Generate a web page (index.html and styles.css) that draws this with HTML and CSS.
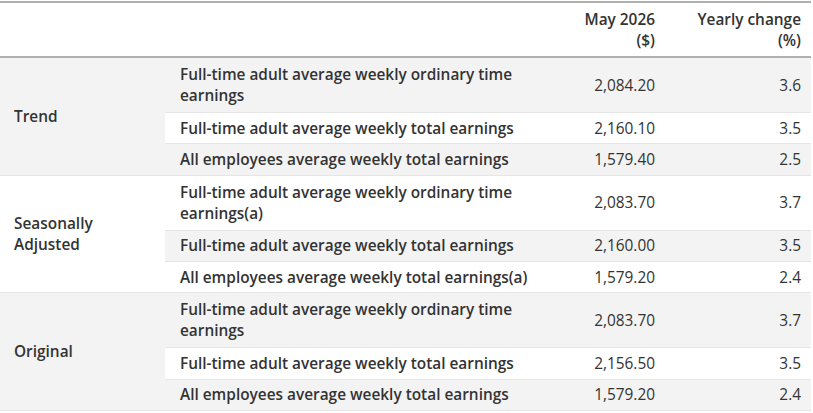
FILE: index.html
```html
<!DOCTYPE html>
<html>
<head>
<meta charset="utf-8">
<link rel="stylesheet" href="styles.css">
</head>
<body>
<table class="earnings">
  <colgroup>
    <col class="c-group">
    <col class="c-desc">
    <col class="c-val">
    <col class="c-chg">
  </colgroup>
  <thead>
    <tr>
      <th></th>
      <th></th>
      <th class="num">May 2026<br>($)</th>
      <th class="num chg">Yearly change<br>(%)</th>
    </tr>
  </thead>
  <tbody>
    <tr class="tall">
      <th class="group" rowspan="3">Trend</th>
      <th class="desc">Full-time adult average weekly ordinary time earnings</th>
      <td class="num">2,084.20</td>
      <td class="num chg">3.6</td>
    </tr>
    <tr>
      <th class="desc">Full-time adult average weekly total earnings</th>
      <td class="num">2,160.10</td>
      <td class="num chg">3.5</td>
    </tr>
    <tr>
      <th class="desc">All employees average weekly total earnings</th>
      <td class="num">1,579.40</td>
      <td class="num chg">2.5</td>
    </tr>
    <tr class="tall">
      <th class="group" rowspan="3">Seasonally<br>Adjusted</th>
      <th class="desc">Full-time adult average weekly ordinary time earnings(a)</th>
      <td class="num">2,083.70</td>
      <td class="num chg">3.7</td>
    </tr>
    <tr>
      <th class="desc">Full-time adult average weekly total earnings</th>
      <td class="num">2,160.00</td>
      <td class="num chg">3.5</td>
    </tr>
    <tr>
      <th class="desc">All employees average weekly total earnings(a)</th>
      <td class="num">1,579.20</td>
      <td class="num chg">2.4</td>
    </tr>
    <tr class="tall">
      <th class="group" rowspan="3">Original</th>
      <th class="desc">Full-time adult average weekly ordinary time earnings</th>
      <td class="num">2,083.70</td>
      <td class="num chg">3.7</td>
    </tr>
    <tr>
      <th class="desc">Full-time adult average weekly total earnings</th>
      <td class="num">2,156.50</td>
      <td class="num chg">3.5</td>
    </tr>
    <tr>
      <th class="desc">All employees average weekly total earnings</th>
      <td class="num">1,579.20</td>
      <td class="num chg">2.4</td>
    </tr>
  </tbody>
</table>
</body>
</html>
```

FILE: styles.css
```css
html, body {
  margin: 0;
  padding: 0;
  background: #ffffff;
}

body {
  padding-top: 1px;
  font-family: "Open Sans", "Liberation Sans", sans-serif;
  font-size: 15.4px;
  color: #333333;
}

.earnings {
  width: 811px;
  border-collapse: collapse;
  border-top: 2px solid #b0b0b0;
  table-layout: fixed;
}

.c-group { width: 165px; }
.c-desc { width: 392px; }
.c-val { width: 110px; }
.c-chg { width: 144px; }

.earnings th,
.earnings td {
  padding: 4.67px 12px 4.67px 15px;
  line-height: 21px;
  text-align: left;
  vertical-align: middle;
}

.earnings thead th {
  font-weight: 600;
  padding-top: 5.5px;
  padding-bottom: 5.5px;
  border-bottom: 2px solid #b0b0b0;
}

.earnings .num {
  text-align: right;
}

.earnings .chg {
  padding-right: 10px;
}

.earnings td {
  font-weight: 400;
}

.earnings tbody th {
  font-weight: 600;
}

.earnings .group {
  padding-left: 14px;
}

.earnings tbody tr:nth-child(odd) {
  background: #f3f3f3;
}

.earnings tbody tr {
  border-bottom: 1px solid #e6e6e6;
}

.earnings tbody tr.tall th.desc,
.earnings tbody tr.tall td {
  padding-top: 6px;
  padding-bottom: 6px;
}
```
